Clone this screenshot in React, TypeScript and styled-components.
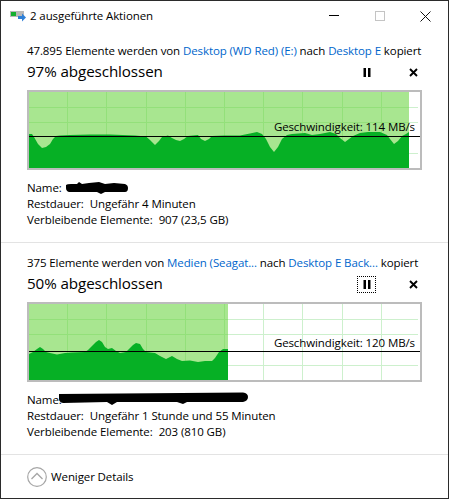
import React from "react";
import styled, { createGlobalStyle } from "styled-components";

const Global = createGlobalStyle`
  html, body { margin: 0; padding: 0; background: #fff; }
  body { font-family: "Open Sans", "Liberation Sans", sans-serif; color: #000; }
`;

const Frame = styled.div`
  box-sizing: border-box;
  width: 449px;
  height: 499px;
  border: 1px solid #2b2b2b;
  background: #fff;
  font-size: 11.5px;
  line-height: 16px;
  letter-spacing: -0.1px;
  overflow: hidden;
`;

const TitleBar = styled.div`
  height: 30px;
  display: flex;
  align-items: center;
  padding-left: 9px;
`;

const Title = styled.div`
  flex: 1;
  margin-left: 4px;
`;

const WindowControl = styled.div`
  width: 45.5px;
  height: 30px;
  display: flex;
  align-items: center;
  justify-content: center;
`;

const Section = styled.section`
  padding: 12px 26px 14px;
  border-bottom: 1px solid #e3e3e3;
`;

const Summary = styled.div`
  white-space: nowrap;
  height: 16px;
`;

const Link = styled.span`
  color: #0066cc;
`;

const HeadRow = styled.div`
  height: 22px;
  margin-top: 2px;
  display: flex;
  align-items: center;
  justify-content: space-between;
`;

const Heading = styled.div`
  font-size: 15.2px;
  letter-spacing: -0.1px;
  margin-bottom: 2px;
`;

const Buttons = styled.div`
  display: flex;
  align-items: center;
  gap: 28px;
  margin-right: -1px;
`;

const IconButton = styled.div<{ $focus?: boolean }>`
  box-sizing: border-box;
  width: 19px;
  height: 17px;
  display: flex;
  align-items: center;
  justify-content: center;
  border: 1px ${(p) => (p.$focus ? "dotted #000" : "solid transparent")};
`;

const ChartBox = styled.div`
  position: relative;
  box-sizing: border-box;
  width: 395px;
  height: 80px;
  margin-top: 7px;
  border: 2px solid #bcbcbc;
  background: #fff;
`;

const ChartSvg = styled.svg`
  display: block;
`;

const SpeedLabel = styled.div`
  position: absolute;
  right: 5px;
  white-space: nowrap;
`;

const Details = styled.div`
  margin-top: 10px;
`;

const DetailRow = styled.div`
  position: relative;
  height: 16px;
  white-space: nowrap;
`;

const Value = styled.span`
  margin-left: 6px;
`;

const Redaction = styled.svg`
  position: absolute;
  top: 0;
`;

const Footer = styled.div`
  height: 43px;
  display: flex;
  align-items: center;
  gap: 4px;
  padding-left: 26px;
`;

const VX = [67, 106, 146, 185, 224, 263, 302, 342, 381];

const Chart: React.FC<{
  top: number;
  fillTo: number;
  lineY: number;
  hy: number[];
  points: [number, number][];
}> = ({ top, fillTo, lineY, hy, points }) => {
  const bottom = top + 76;
  const area = `M29 ${bottom} ` + points.map(([x, y]) => `L${x} ${y}`).join(" ") + ` L${fillTo} ${bottom} Z`;
  const clipId = `fill-${top}`;
  const grid = (stroke: string, clip?: string) => (
    <g stroke={stroke} strokeWidth="1" clipPath={clip}>
      {VX.map((x) => (
        <line key={x} x1={x + 0.5} x2={x + 0.5} y1={top} y2={bottom} />
      ))}
      {hy.map((y) => (
        <line key={y} x1={29} x2={418} y1={y + 0.5} y2={y + 0.5} />
      ))}
    </g>
  );
  return (
    <ChartSvg width="391" height="76" viewBox={`29 ${top} 391 76`}>
      <defs>
        <clipPath id={clipId}>
          <rect x="29" y={top} width={fillTo - 29} height="76" />
        </clipPath>
      </defs>
      {grid("#cdf0cd")}
      <rect x="29" y={top} width={fillTo - 29} height="76" fill="#a8e690" />
      {grid("#93e07a", `url(#${clipId})`)}
      <path d={area} fill="#06b025" />
      <line x1="29" x2="420" y1={lineY + 0.5} y2={lineY + 0.5} stroke="#000" strokeWidth="1" />
    </ChartSvg>
  );
};

const PauseIcon = () => (
  <svg width="8" height="9" viewBox="0 0 8 9">
    <rect x="0.5" y="0" width="2.5" height="9" fill="#000" />
    <rect x="5" y="0" width="2.5" height="9" fill="#000" />
  </svg>
);

const CloseIcon = () => (
  <svg width="9" height="9" viewBox="0 0 9 9">
    <path d="M1 1 L8 8 M8 1 L1 8" stroke="#000" strokeWidth="1.9" fill="none" />
  </svg>
);

const Row1: [number, number][] = [
  [29, 134], [32, 134], [34, 137], [38, 144], [42, 148], [46, 147], [50, 144], [53, 139], [56, 136], [60, 135.5],
  [70, 135], [90, 134.5], [110, 134.5], [135, 135.5], [146, 136.5], [150, 140], [155, 145], [159, 141], [162, 137],
  [168, 135.5], [172, 138], [176, 140], [180, 141], [184, 139], [188, 136], [198, 135], [201, 139], [205, 141],
  [209, 139], [212, 136], [224, 135.5], [240, 135.5], [245, 134.5], [250, 133.5], [257, 132], [262, 134], [266, 139],
  [270, 147], [274, 152], [278, 147], [282, 139], [287, 135], [292, 134], [305, 133], [312, 135], [320, 134],
  [330, 132], [336, 134], [340, 138], [345, 142], [349, 139], [353, 136], [360, 133], [368, 132], [380, 132],
  [387, 135], [390, 139], [394, 144], [398, 141], [402, 136], [406, 134], [409, 132],
];

const Row2: [number, number][] = [
  [29, 354], [33, 352], [37, 349], [40, 347], [43, 349], [46, 352], [50, 353], [57, 354.5], [65, 353], [72, 352.5],
  [85, 352], [88, 350], [92, 346], [96, 342], [99, 340], [102, 342], [105, 347], [108, 349], [112, 348], [116, 351],
  [120, 353], [126, 352], [129, 349], [133, 345], [136, 343], [140, 344], [143, 349], [146, 352], [155, 353],
  [160, 356], [166, 359], [172, 356], [177, 359], [182, 361], [190, 360.5], [198, 362], [205, 361], [212, 361],
  [215, 358], [219, 352], [223, 349], [228, 349],
];

const Blob1 = () => (
  <Redaction style={{ left: 38 }} width="64" height="16" viewBox="0 0 64 16">
    <path d="M1 5 Q2 4 6 4 L12 4 L14 2 L17 4 L24 3 L34 2 L40 4 L49 3 L60 4 Q63 5 63 8 Q63 12 60 12 L40 12 L36 14 L32 12 L4 12 Q1 11 1 8 Z" fill="#000" />
  </Redaction>
);

const Blob2 = () => (
  <Redaction style={{ left: 30 }} width="192" height="16" viewBox="0 0 192 16">
    <path d="M2 2 L186 0.5 Q191 1 191 5 Q191 9 186 10 L130 10 L126 12 L120 10 L60 10 L55 13 L50 10 L6 11 Q2 10 2 7 Z" fill="#000" />
  </Redaction>
);

const Action: React.FC<{
  summary: React.ReactNode;
  heading: string;
  focus?: boolean;
  chart: React.ReactNode;
  labelTop: number;
  speed: string;
  blob: React.ReactNode;
  rest: string;
  items: string;
}> = ({ summary, heading, focus, chart, labelTop, speed, blob, rest, items }) => (
  <Section>
    <Summary>{summary}</Summary>
    <HeadRow>
      <Heading>{heading}</Heading>
      <Buttons>
        <IconButton $focus={focus}>
          <PauseIcon />
        </IconButton>
        <IconButton>
          <CloseIcon />
        </IconButton>
      </Buttons>
    </HeadRow>
    <ChartBox>
      {chart}
      <SpeedLabel style={{ top: labelTop }}>Geschwindigkeit: {speed}</SpeedLabel>
    </ChartBox>
    <Details>
      <DetailRow>
        Name:
        {blob}
      </DetailRow>
      <DetailRow>
        Restdauer:<Value>{rest}</Value>
      </DetailRow>
      <DetailRow>
        Verbleibende Elemente:<Value>{items}</Value>
      </DetailRow>
    </Details>
  </Section>
);

export default function App() {
  return (
    <>
      <Global />
      <Frame>
        <TitleBar>
          <svg width="16" height="12" viewBox="0 0 16 12">
            <rect x="0" y="1" width="14" height="6" fill="#b8b8b8" />
            <rect x="1" y="2" width="5" height="4" fill="#14b030" />
            <path d="M8 6 H12 V3.5 L16 7.5 L12 11.5 V9 H8 Z" fill="#2f7fd6" />
          </svg>
          <Title>2 ausgeführte Aktionen</Title>
          <WindowControl>
            <svg width="10" height="10" viewBox="0 0 10 10">
              <rect x="0" y="4" width="10" height="1" fill="#000" />
            </svg>
          </WindowControl>
          <WindowControl>
            <svg width="10" height="10" viewBox="0 0 10 10">
              <rect x="0.5" y="0.5" width="9" height="9" fill="none" stroke="#c4c4c4" />
            </svg>
          </WindowControl>
          <WindowControl>
            <svg width="11" height="11" viewBox="0 0 11 11">
              <path d="M0.5 0.5 L10.5 10.5 M10.5 0.5 L0.5 10.5" stroke="#111" strokeWidth="1" fill="none" />
            </svg>
          </WindowControl>
        </TitleBar>
        <Action
          summary={
            <>
              47.895 Elemente werden von <Link>Desktop (WD Red) (E:)</Link> nach <Link>Desktop E</Link> kopiert
            </>
          }
          heading="97% abgeschlossen"
          chart={<Chart top={92} fillTo={409} lineY={136} hy={[107, 122, 153]} points={Row1} />}
          labelTop={27}
          speed="114 MB/s"
          blob={<Blob1 />}
          rest="Ungefähr 4 Minuten"
          items="907 (23,5 GB)"
        />
        <Action
          summary={
            <>
              375 Elemente werden von <Link>Medien (Seagat...</Link> nach <Link>Desktop E Back...</Link> kopiert
            </>
          }
          heading="50% abgeschlossen"
          focus
          chart={<Chart top={304} fillTo={228} lineY={351} hy={[319, 334, 365]} points={Row2} />}
          labelTop={31}
          speed="120 MB/s"
          blob={<Blob2 />}
          rest="Ungefähr 1 Stunde und 55 Minuten"
          items="203 (810 GB)"
        />
        <Footer>
          <svg width="20" height="20" viewBox="0 0 20 20">
            <circle cx="10" cy="10" r="9.3" fill="none" stroke="#a6a6a6" strokeWidth="1.2" />
            <path d="M4.5 12 L10 6.5 L15.5 12" fill="none" stroke="#a6a6a6" strokeWidth="1.3" />
          </svg>
          <span>Weniger Details</span>
        </Footer>
      </Frame>
    </>
  );
}
